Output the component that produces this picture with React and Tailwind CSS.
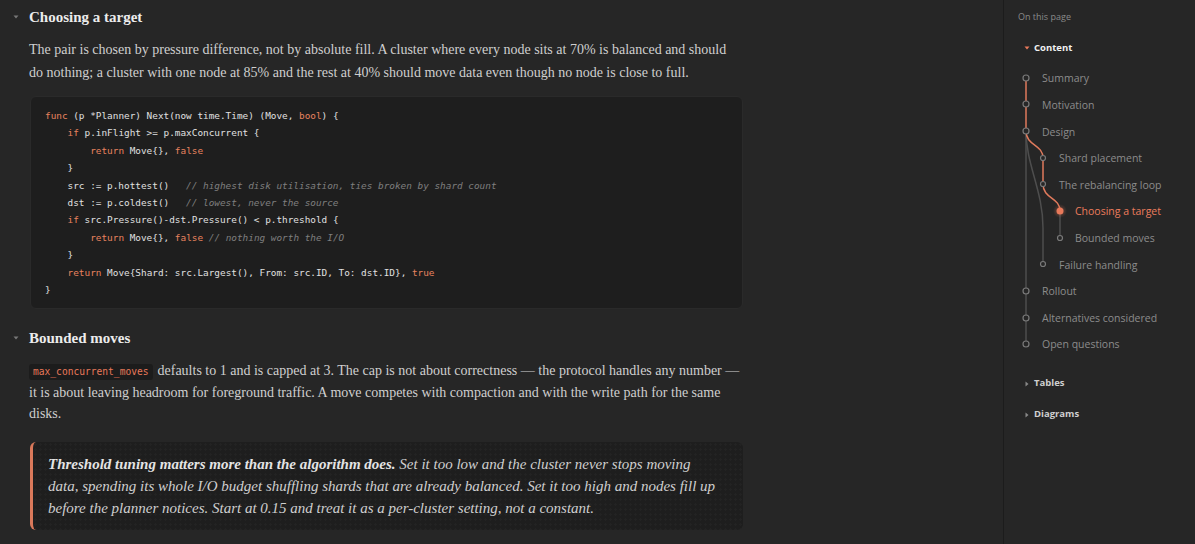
import React from 'react';

const serif = { fontFamily: '"Liberation Serif", "DejaVu Serif", serif' };
const mono = { fontFamily: '"DejaVu Sans Mono", "Liberation Mono", monospace' };
const sans = { fontFamily: '"Open Sans", "Noto Sans", sans-serif' };

const K = ({ children }) => <span className="text-[#e8835f]">{children}</span>;
const C = ({ children }) => <span className="italic text-[#7f7f7f]">{children}</span>;

const Caret = ({ orange }) => (
  <svg width="6" height="6" viewBox="0 0 6 6" className="shrink-0">
    <path d="M0.5 1.5 L5.5 1.5 L3 4.5 Z" fill={orange ? '#e8795a' : '#777'} />
  </svg>
);

const CaretRight = () => (
  <svg width="6" height="6" viewBox="0 0 6 6" className="shrink-0">
    <path d="M1.5 0.5 L4.5 3 L1.5 5.5 Z" fill="#888" />
  </svg>
);

const Heading = ({ children }) => (
  <div className="flex items-center -ml-[16px] h-[20px]">
    <div className="w-[16px] flex justify-start">
      <Caret />
    </div>
    <h2 className="text-[15px] font-bold text-[#ececec] leading-[20px]" style={serif}>
      {children}
    </h2>
  </div>
);

const tocItems = [
  { label: 'Summary', indent: 38 },
  { label: 'Motivation', indent: 38 },
  { label: 'Design', indent: 38 },
  { label: 'Shard placement', indent: 55 },
  { label: 'The rebalancing loop', indent: 55 },
  { label: 'Choosing a target', indent: 71, active: true },
  { label: 'Bounded moves', indent: 71 },
  { label: 'Failure handling', indent: 55 },
  { label: 'Rollout', indent: 38 },
  { label: 'Alternatives considered', indent: 38 },
  { label: 'Open questions', indent: 38 },
];

const TocTree = () => (
  <svg className="absolute left-0 top-0 pointer-events-none" width="192" height="544" viewBox="0 0 192 544">
    <defs>
      <radialGradient id="glow">
        <stop offset="0%" stopColor="#e8795a" stopOpacity="0.45" />
        <stop offset="100%" stopColor="#e8795a" stopOpacity="0" />
      </radialGradient>
    </defs>
    <path d="M22 131 L22 344" stroke="#4e4e4e" strokeWidth="1.5" fill="none" />
    <path d="M22 131 C22 165 39 190 39 228 L39 264" stroke="#4e4e4e" strokeWidth="1.5" fill="none" />
    <path d="M56 211 L56 238" stroke="#4e4e4e" strokeWidth="1.5" fill="none" />
    <path d="M22 78 L22 131 C22 146 39 144 39 158 L39 184 C39 199 56 197 56 211" stroke="#e07a5c" strokeWidth="1.5" fill="none" />
    {[78, 104, 131, 291, 318, 344].map((y) => (
      <circle key={y} cx="22" cy={y} r="3" fill="#262626" stroke="#7a7a7a" strokeWidth="1.2" />
    ))}
    {[158, 184, 264].map((y) => (
      <circle key={y} cx="39" cy={y} r="2.5" fill="#262626" stroke="#7a7a7a" strokeWidth="1.2" />
    ))}
    <circle cx="56" cy="238" r="2.5" fill="#262626" stroke="#7a7a7a" strokeWidth="1.2" />
    <circle cx="56" cy="211" r="7" fill="url(#glow)" />
    <circle cx="56" cy="211" r="3.5" fill="#e8795a" />
  </svg>
);

export default function App() {
  return (
    <div className="w-[1195px] h-[544px] flex bg-[#262626] overflow-hidden">
      <main className="w-[1003px] shrink-0 pl-[29px] pt-[7px]">
        <div className="w-[715px]">
          <Heading>Choosing a target</Heading>
          <p className="mt-[10.5px] w-[708px] text-[14px] leading-[23px] text-[#cfcfcf]" style={serif}>
            The pair is chosen by pressure difference, not by absolute fill. A cluster where every node sits at 70% is balanced and should do nothing; a cluster with one node at 85% and the rest at 40% should move data even though no node is close to full.
          </p>
          <pre
            className="mt-[12.5px] ml-[1px] w-[713px] bg-[#1e1e1e] rounded-[6px] pl-[14px] pt-[10px] pb-[10px] text-[9.4px] leading-[17.4px] text-[#e0e0e0] border border-[#2a2a2a]"
            style={mono}
          >
{<><K>func</K> (p *Planner) Next(now time.Time) (Move, <K>bool</K>) {'{'}{'\n'}</>}
{<>    <K>if</K> p.inFlight &gt;= p.maxConcurrent {'{'}{'\n'}</>}
{<>        <K>return</K> Move{'{}'}, <K>false</K>{'\n'}</>}
{<>    {'}'}{'\n'}</>}
{<>    src := p.hottest()   <C>// highest disk utilisation, ties broken by shard count</C>{'\n'}</>}
{<>    dst := p.coldest()   <C>// lowest, never the source</C>{'\n'}</>}
{<>    <K>if</K> src.Pressure()-dst.Pressure() &lt; p.threshold {'{'}{'\n'}</>}
{<>        <K>return</K> Move{'{}'}, <K>false</K> <C>// nothing worth the I/O</C>{'\n'}</>}
{<>    {'}'}{'\n'}</>}
{<>    <K>return</K> Move{'{'}Shard: src.Largest(), From: src.ID, To: dst.ID{'}'}, <K>true</K>{'\n'}</>}
{<>{'}'}</>}
          </pre>
          <div className="mt-[19px]">
            <Heading>Bounded moves</Heading>
          </div>
          <p className="mt-[12px] text-[14px] leading-[21.5px] text-[#cfcfcf]" style={serif}>
            <code className="inline-block bg-[#1c1c1c] text-[#e8795a] rounded-[3px] px-[4px] leading-[16px] text-[9.6px] mr-[5px]" style={mono}>
              max_concurrent_moves
            </code>
            defaults to 1 and is capped at 3. The cap is not about correctness — the protocol handles any number — it is about leaving headroom for foreground traffic. A move competes with compaction and with the write path for the same disks.
          </p>
          <blockquote
            className="mt-[17.5px] ml-[1px] w-[713px] rounded-[6px] border-l-[3px] border-[#d9785a] bg-[#1e1e1e] bg-[radial-gradient(circle,#232323_1px,transparent_1.2px)] bg-[length:5px_5px] pl-[15px] pr-[20px] py-[11px] text-[15px] leading-[22px] italic text-[#cfcfcf]"
            style={serif}
          >
            <strong className="font-bold text-[#e4e4e4]">Threshold tuning matters more than the algorithm does.</strong> Set it too low and the cluster never stops moving data, spending its whole I/O budget shuffling shards that are already balanced. Set it too high and nodes fill up before the planner notices. Start at 0.15 and treat it as a per-cluster setting, not a constant.
          </blockquote>
        </div>
      </main>
      <aside className="relative flex-1 border-l border-[#1c1c1c] bg-[#262626] pl-[14px] pt-[11px]" style={sans}>
        <TocTree />
        <div className="text-[9px] leading-[12px] text-[#8a8a8a]">On this page</div>
        <div className="mt-[19px] flex items-center gap-[4px] pl-[6px] h-[12px]">
          <Caret orange />
          <span className="text-[9.5px] font-bold text-[#f0f0f0]">Content</span>
        </div>
        <div className="relative mt-[12px] -ml-[14px]">
          {tocItems.map((it) => (
            <div
              key={it.label}
              className={`h-[26.6px] flex items-center text-[10.5px] ${it.active ? 'text-[#ec7c5c]' : 'text-[#8c8c8c]'}`}
              style={{ paddingLeft: it.indent }}
            >
              {it.label}
            </div>
          ))}
        </div>
        <div className="mt-[18px] flex items-center gap-[4px] pl-[6px] h-[14px]">
          <CaretRight />
          <span className="text-[9.5px] font-bold text-[#cfcfcf]">Tables</span>
        </div>
        <div className="mt-[17px] flex items-center gap-[4px] pl-[6px] h-[14px]">
          <CaretRight />
          <span className="text-[9.5px] font-bold text-[#cfcfcf]">Diagrams</span>
        </div>
      </aside>
    </div>
  );
}
